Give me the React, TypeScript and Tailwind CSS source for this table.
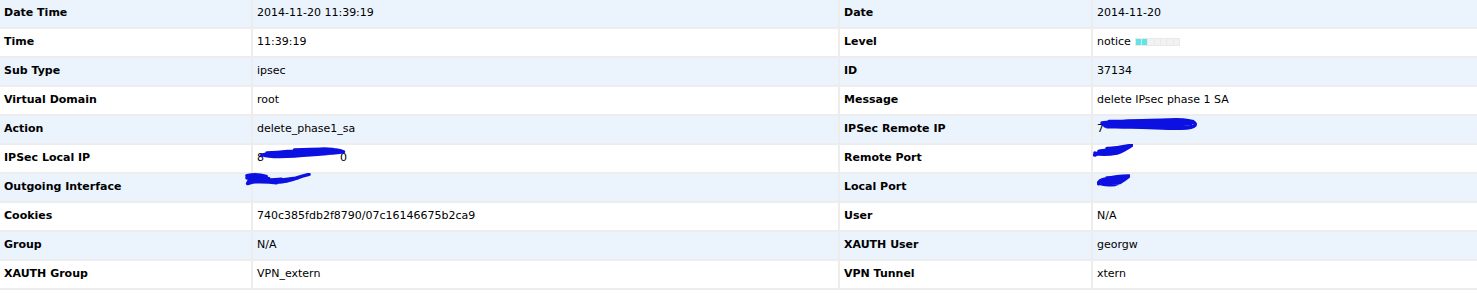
import type { ReactNode } from "react";

type Row = { l1: string; v1: ReactNode; l2: string; v2: ReactNode };

// blue marker over redacted values
function Scribble({ d, className }: { d: string; className: string }) {
  return (
    <svg className={`absolute pointer-events-none ${className}`} viewBox="0 0 100 20" preserveAspectRatio="none">
      <path
        d={d}
        fill="none"
        stroke="#0c10e0"
        strokeWidth="3.5"
        vectorEffect="non-scaling-stroke"
        strokeLinecap="round"
        strokeLinejoin="round"
      />
    </svg>
  );
}

function Level() {
  return (
    <span className="inline-flex ml-[4px] h-[8px] w-[45px] bg-[#e9e9e9] gap-[1px] p-[1px] align-middle">
      {[0, 1, 2, 3, 4, 5, 6].map((i) => (
        <span key={i} className={`flex-1 ${i < 2 ? "bg-[#5ee6e6]" : "bg-[#f2f2f2]"}`} />
      ))}
    </span>
  );
}

const ROWS: Row[] = [
  { l1: "Date Time", v1: "2014-11-20 11:39:19", l2: "Date", v2: "2014-11-20" },
  { l1: "Time", v1: "11:39:19", l2: "Level", v2: <>notice<Level /></> },
  { l1: "Sub Type", v1: "ipsec", l2: "ID", v2: "37134" },
  { l1: "Virtual Domain", v1: "root", l2: "Message", v2: "delete IPsec phase 1 SA" },
  {
    l1: "Action",
    v1: "delete_phase1_sa",
    l2: "IPSec Remote IP",
    v2: (
      <span className="relative">
        7
        <Scribble
          className="left-[2px] top-[-5px] w-[100px] h-[15px]"
          d="M3 8 C25 4 50 5 70 4 C85 3 98 5 96 11 C93 17 70 15 50 14 C35 13 20 14 6 12 M4 10 C30 8 60 9 92 9 M10 6 C40 5 70 6 94 6 M8 13 C35 11 65 12 90 14"
        />
      </span>
    ),
  },
  {
    l1: "IPSec Local IP",
    v1: (
      <span className="relative">
        8<span className="ml-[76px]">0</span>
        <Scribble
          className="left-[3px] top-[-4px] w-[86px] h-[12px]"
          d="M2 14 C15 6 40 8 60 5 C75 3 90 4 97 8 C80 11 60 13 40 15 C25 16 10 17 4 13 M8 10 C30 8 60 7 90 7 M12 13 C40 11 65 11 85 10 M40 5 C55 4 70 3 85 4"
        />
      </span>
    ),
    l2: "Remote Port",
    v2: (
      <span className="relative">
        <Scribble
          className="left-[-4px] top-[-7px] w-[40px] h-[13px]"
          d="M4 17 C25 11 50 6 97 2 C80 9 70 12 60 14 C40 16 20 17 5 14 M15 11 C40 9 60 8 80 8 M20 14 C40 12 60 11 75 10 M35 7 C55 6 70 5 85 5"
        />
        &nbsp;
      </span>
    ),
  },
  {
    l1: "Outgoing Interface",
    v1: (
      <span className="relative">
        <Scribble
          className="left-[-12px] top-[-7px] w-[66px] h-[14px]"
          d="M3 4 C12 2 25 3 32 5 M3 7 C15 5 28 6 36 8 M4 15 C20 11 35 9 45 12 C60 15 72 8 97 2 M6 11 C25 9 40 11 55 9 M5 13 C20 12 35 12 48 14 M50 11 C60 9 70 8 80 7"
        />
        &nbsp;
      </span>
    ),
    l2: "Local Port",
    v2: (
      <span className="relative">
        <Scribble
          className="left-[0px] top-[-6px] w-[33px] h-[13px]"
          d="M5 15 C20 8 40 4 97 3 C80 10 70 14 55 16 C35 17 15 17 5 13 C10 8 30 6 60 7 M12 12 C35 10 60 10 80 9 M20 15 C40 13 60 13 70 13 M30 6 C50 5 70 5 88 5"
        />
        &nbsp;
      </span>
    ),
  },
  { l1: "Cookies", v1: "740c385fdb2f8790/07c16146675b2ca9", l2: "User", v2: "N/A" },
  { l1: "Group", v1: "N/A", l2: "XAUTH User", v2: "georgw" },
  { l1: "XAUTH Group", v1: "VPN_extern", l2: "VPN Tunnel", v2: "xtern" },
];

export default function App() {
  return (
    <div className="w-[1477px] h-[294px] bg-white" style={{ fontFamily: '"DejaVu Sans", Verdana, sans-serif' }}>
      <div className="grid grid-cols-[251px_585px_251px_1fr] gap-[2px] pb-[2px] bg-[#ededed] text-[11px] leading-[13px] text-black">
        {ROWS.map((r, i) => {
          const bg = i % 2 === 0 ? "bg-[#ebf3fd]" : "bg-white";
          const cell = `${bg} h-[27px] flex items-center pl-[4px] pb-[2px] whitespace-nowrap`;
          return [
            <div key={`a${i}`} className={`${cell} font-bold`}>{r.l1}</div>,
            <div key={`b${i}`} className={`${cell} pl-[3px]`}>{r.v1}</div>,
            <div key={`c${i}`} className={`${cell} pl-[3px] font-bold`}>{r.l2}</div>,
            <div key={`d${i}`} className={`${cell} pl-[3px]`}>{r.v2}</div>,
          ];
        })}
      </div>
    </div>
  );
}
